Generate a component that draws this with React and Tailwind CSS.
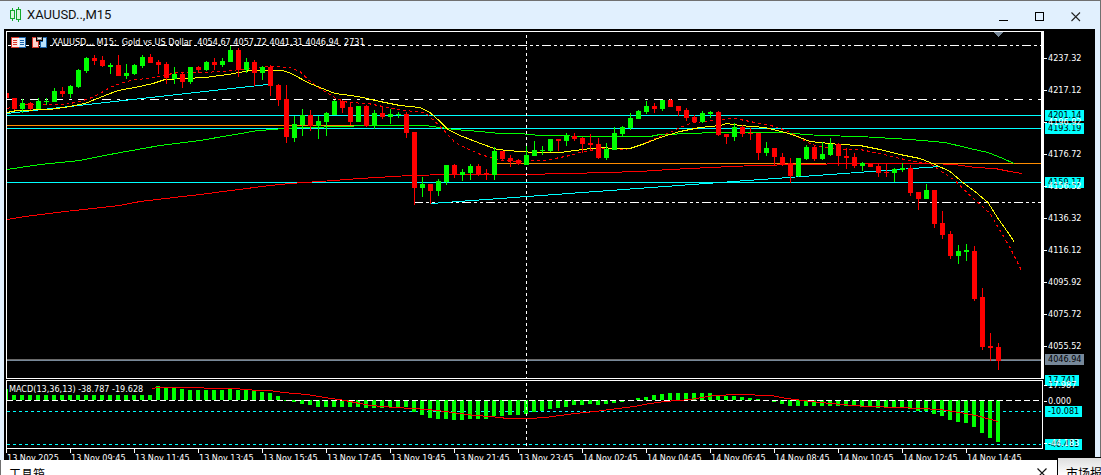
import React from "react";

// Each candle: direction, high, body top, body bottom, low. Candles are 8 units apart.
const CANDLES = `r 93 93 98 107|r 98 98 109 110|g 99 103 109 113|r 102 103 109 110|g 98 101 109 109|g 98 101 102 105|g 88 91 102 102|r 87 91 94 97|g 85 86 94 98|g 69 70 87 88|g 57 58 71 73|r 55 58 61 65|r 56 60 66 67|g 63 65 67 74|r 55 65 76 76|g 64 73 76 79|g 64 65 74 75|g 55 57 66 68|r 54 57 63 63|r 60 62 65 74|r 62 64 78 84|g 67 74 79 84|r 73 74 82 88|g 67 67 82 84|r 66 67 70 73|g 61 62 70 71|r 58 62 65 70|g 58 61 65 67|g 46 50 62 62|r 48 50 70 77|g 58 62 70 73|r 60 62 73 86|g 66 67 73 80|r 65 67 86 96|r 84 85 100 106|r 85 99 137 143|g 116 124 138 142|g 109 115 125 136|r 110 115 126 131|g 116 121 126 139|g 112 113 122 136|g 100 101 115 115|r 100 101 108 113|r 103 107 122 125|g 106 106 122 122|r 105 106 126 127|g 110 113 126 129|r 107 113 117 119|g 109 114 117 124|g 112 114 115 118|r 112 114 133 138|r 132 132 188 205|g 177 184 188 197|r 184 184 191 204|g 179 181 191 196|g 165 165 182 185|r 164 165 175 178|g 169 172 175 181|g 164 166 173 180|r 164 166 175 176|r 169 173 174 180|g 147 151 175 180|r 151 151 159 161|r 155 158 161 167|r 159 160 164 165|g 146 155 165 165|g 141 150 156 156|g 146 150 151 155|g 139 139 151 152|r 139 139 141 151|g 133 136 141 146|r 133 136 139 141|r 137 138 144 153|r 134 143 145 150|r 138 144 158 159|g 143 149 158 160|g 127 133 150 150|g 126 127 134 136|g 113 118 128 130|g 110 111 119 119|g 101 106 112 114|r 103 106 109 113|g 100 100 109 111|r 99 100 107 107|r 106 106 111 116|r 108 110 118 121|r 115 117 122 123|g 111 113 122 123|g 111 112 114 118|r 111 112 135 136|r 134 134 137 144|g 123 127 137 141|r 125 127 134 137|r 128 133 134 140|r 133 133 153 160|g 142 148 153 156|r 148 148 157 166|r 153 157 165 166|r 158 163 176 183|g 158 158 176 177|g 145 147 159 160|r 145 147 159 161|g 142 154 159 160|g 138 144 155 156|r 143 144 156 166|r 148 156 158 169|r 153 157 166 168|g 162 163 166 171|r 163 164 167 167|r 164 166 173 177|r 164 172 173 177|g 168 169 173 182|g 163 168 170 172|r 165 168 193 196|r 192 192 199 210|g 184 190 199 199|r 190 190 224 228|r 211 223 235 239|r 231 234 256 259|g 245 251 256 264|g 244 250 252 261|r 246 251 299 301|r 288 297 347 350|r 333 346 348 361|r 343 347 361 370`
  .split("|")
  .map((row, i) => {
    const [dir, high, top, bottom, low] = row.split(" ");
    return { x: 6 + i * 8, fill: dir === "r" ? "#ff0000" : "#00ff00", high: +high, top: +top, bottom: +bottom, low: +low };
  });

// Histogram ends; the zero level is at 400.
const HISTOGRAM = [
  389, ...Array(18).fill(395), 386, 388, 388, 389, 390, 390, 390, 390, 390, 389, 390, 390, 391, 392, 393, 396, 401, 402, 404, 405,
  407, 407, 407, 407, 407, 407, 408, 408, 408, 407, 407, 407, 412, 415, 418, 419, 419, 420, 420, 419, 419, 419, 416, 416, 415, 415,
  414, 412, 411, 409, 408, 407, 405, 405, 404, 405, 404, 403, 402, 401, 398, 397, 395, 394, 393, 393, 393, 393, 393, 393, 396, 396,
  396, 397, 398, 399, 401, 402, 404, 406, 406, 406, 406, 406, 406, 406, 406, 406, 407, 406, 408, 408, 407, 407, 409, 411, 411, 414,
  416, 420, 422, 423, 427, 433, 438, 442,
];

const YELLOW = "7,112 17,110 50,109 64,107 85,103 100,97 118,90 135,87 153,83 165,79 205,77 228,74 245,71 250,70 283,70 291,73 310,83 335,93 358,96 380,101 400,105 420,107 430,112 440,121 448,129 460,135 478,142 497,149 520,151 535,152 560,152 575,150 600,147 615,148 630,148 645,143 660,137 670,134 680,131 700,127 720,125 727,123 740,125 765,127 785,132 795,135 810,141 840,144 860,145 880,149 900,154 920,158 935,164 950,171 964,183 975,191 988,202 998,218 1008,232 1014,241";
const DOTTED = "7,108 25,104 65,104 80,101 92,97 100,93 110,87 120,83 135,79 150,78 163,75 178,72 200,72 225,71 240,69 255,67 275,66 290,67 300,71 308,79 318,87 327,92 336,98 348,102 368,103 388,107 405,110 425,112 435,121 445,131 455,142 465,147 478,153 490,157 500,160 515,161 530,160 545,160 560,157 570,155 580,152 595,149 605,148 625,149 640,145 655,138 670,132 680,127 690,123 703,121 720,119 735,118 745,120 760,123 775,126 788,131 810,143 818,146 840,149 860,149 880,153 900,158 915,161 930,163 940,170 955,180 970,195 990,213 1000,230 1010,247 1021,269";
const GREEN = "7,169 40,164 80,160 115,153 160,145 200,140 235,134 258,130 275,129 282,128 338,126 370,125 425,125 440,127 455,129 480,131 500,133 520,133 540,135 600,136 650,136 660,134 695,133 710,132 780,132 820,135 860,136 910,139 945,142 970,148 988,152 1003,158 1014,163";
const RED = "7,219 25,216 65,211 120,205 140,201 200,194 270,185 290,183 320,181 360,178 410,175 450,174 520,174 570,173 640,171 670,169 710,167 755,165 800,164 826,164 828,163 930,163 955,164 975,167 995,168 1010,171 1022,173";
const SIGNAL = "152,388 158,387 200,387 208,388 234,388 258,390 270,390 283,392 307,394 325,397 345,400 360,403 371,405 395,407 413,408 427,409 445,411 460,413 475,415 490,416 508,418 530,418 545,417 560,415 575,413 595,411 610,409 634,406 650,403 665,401 690,399 714,395 738,394 771,395 787,398 803,400 820,402 842,404 867,406 900,407 940,409 966,413 980,416 998,421";

const PRICES = ["4237.32", "4217.12", "4196.92", "4176.72", "4156.52", "4136.32", "4116.12", "4095.92", "4075.72", "4055.52"];
const TIMES = [
  "13 Nov 2025", "13 Nov 09:45", "13 Nov 11:45", "13 Nov 13:45", "13 Nov 15:45", "13 Nov 17:45", "13 Nov 19:45", "13 Nov 21:45",
  "13 Nov 23:45", "14 Nov 02:45", "14 Nov 04:45", "14 Nov 06:45", "14 Nov 08:45", "14 Nov 10:45", "14 Nov 12:45", "14 Nov 14:45",
];

function H({ y, from = 7, to = 1041, ...rest }) {
  return <path d={`M${from} ${y + 0.5}H${to}`} {...rest} />;
}

function Curve({ points, ...rest }) {
  return <polyline points={points} transform="translate(0 0.5)" {...rest} />;
}

function PriceChart() {
  return (
    <svg viewBox="6 31 1038 348" preserveAspectRatio="none" className="block h-[348px] w-full" shapeRendering="crispEdges" fill="none" aria-label="Price chart">
      <g stroke="#00ffff">
        <H y={115} />
        <H y={128} />
        <H y={182} />
      </g>
      <H y={125} to={370} stroke="#ff8c00" />
      <Curve points={RED} stroke="#ff0000" />
      <H y={163} from={497} to={826} stroke="#ff8c00" />
      <H y={163} from={930} stroke="#ff8c00" />
      <H y={359} stroke="#696969" />
      <H y={360} stroke="#778899" />
      <g stroke="#ffffff">
        <H y={45} strokeDasharray="9 3 3 3 3 3" strokeDashoffset="17" />
        <H y={99} from={6} strokeDasharray="9 6 3 6" />
        <H y={202} from={414} strokeDasharray="9 3 3 3 3 3" />
        <path d="M526.5 31V378" strokeDasharray="3 3" strokeDashoffset="2" />
      </g>
      <Curve points={GREEN} stroke="#00ff00" />
      <Curve points="7,113 268,84" stroke="#00ffff" />
      <Curve points="431,203 940,166" stroke="#00ffff" />
      <Curve points={DOTTED} stroke="#ff0000" strokeDasharray="3 3" />
      <Curve points={YELLOW} stroke="#ffff00" />
      {CANDLES.map((c) => (
        <g key={c.x} fill={c.fill}>
          <rect x={c.x} y={c.high} width="1" height={c.low - c.high} />
          <rect x={c.x - 2} y={c.top} width="5" height={c.bottom - c.top} />
        </g>
      ))}
      <path d="M994 32H1003L998.5 37Z" fill="#778899" />
      <path d="M6 31.5H1044M6.5 31V379M6 378.5H1044" stroke="#fff" />
      <path d="M1041 31H1044V379H1041Z" fill="#fff" />
    </svg>
  );
}

function MacdChart() {
  return (
    <svg viewBox="6 380 1038 69" preserveAspectRatio="none" className="block h-[69px] w-full" shapeRendering="crispEdges" fill="none" aria-label="MACD">
      <H y={411} stroke="#00ffff" strokeDasharray="3 3" />
      <H y={444} stroke="#00ffff" strokeDasharray="3 3" />
      {HISTOGRAM.map((end, i) => (
        <rect key={i} x={4 + i * 8} y={Math.min(end, 400)} width="4" height={Math.max(Math.abs(end - 400), 1)} fill="#00ff00" />
      ))}
      <H y={400} stroke="#fff" strokeDasharray="6 3" />
      <path d="M526.5 380V448" stroke="#fff" strokeDasharray="3 3" strokeDashoffset="3" />
      <Curve points={SIGNAL} stroke="#ff0000" />
      <path d="M6 380.5H1043M6.5 380V449M6 448.5H1043M1042.5 380V449" stroke="#fff" />
    </svg>
  );
}

function Tick({ children, className = "" }) {
  return (
    <div className={`flex items-center gap-px text-white ${className}`}>
      <span className="h-px w-[3px] bg-white" />
      <span>{children}</span>
    </div>
  );
}

function Level({ children, className }) {
  return <div className={`absolute left-px h-[11px] pl-[3px] leading-[11px] text-black ${className}`}>{children}</div>;
}

function Axis() {
  return (
    <div className="relative w-[51px] shrink-0 pt-[13px]">
      <Level className="top-[81px] w-[39px] bg-[#00ffff]">4201.14</Level>
      <Level className="top-[94px] w-[39px] bg-[#00ffff]">4193.19</Level>
      <Level className="top-[148px] w-[39px] bg-[#00ffff]">4159.17</Level>
      <Level className="top-[325px] w-[39px] bg-[#778899]">4046.94</Level>
      <Level className="top-[346px] w-[34px] bg-[#00ffff]">17.741</Level>
      <Level className="top-[377px] w-[37px] bg-[#00ffff]">-10.081</Level>
      <Level className="top-[410px] w-[37px] bg-[#00ffff]">-46.411</Level>
      <div className="relative">
        {PRICES.map((p) => (
          <Tick key={p} className="h-8">{p}</Tick>
        ))}
        <Tick className="mt-[15px] h-4">17.987</Tick>
        <Tick className="h-4">0.000</Tick>
        <Tick className="mt-[26px] h-4">-44.183</Tick>
      </div>
    </div>
  );
}

function CandlesIcon() {
  return (
    <svg width="12" height="16" viewBox="0 0 12 16" fill="#d8f6dc" stroke="#12a82a" shapeRendering="crispEdges" aria-hidden="true">
      <path d="M2.5 1V14M8.5 0V15" />
      <path d="M.5 3.5H4.5V11.5H.5ZM6.5 2.5H10.5V12.5H6.5Z" />
    </svg>
  );
}

function DepthIcon() {
  return (
    <svg width="15" height="11" viewBox="0 0 15 11" shapeRendering="crispEdges" aria-hidden="true">
      <path d="M0 0H8V11H0Z" fill="#d8382c" />
      <path d="M8 0H15V11H8Z" fill="#1c62a8" />
      <path d="M1 1H7V10H1Z" fill="#ffe9e5" />
      <path d="M7 1H8V10H7Z" fill="#fff" />
      <path d="M8 1H14V10H8Z" fill="#d3ecfd" />
      <path d="M2 3H6V4H2ZM2 5H6V6H2ZM2 7H6V8H2Z" fill="#d8382c" />
      <path d="M9 3H13V4H9ZM9 5H13V6H9ZM9 7H13V8H9Z" fill="#1c62a8" />
    </svg>
  );
}

function TradeIcon() {
  return (
    <svg width="15" height="11" viewBox="0 0 15 11" shapeRendering="crispEdges" aria-hidden="true">
      <path d="M0 0H4V4H7V11H0Z" fill="#d8382c" />
      <path d="M1 1H4V5H6V10H1Z" fill="#ffd5cd" />
      <path d="M11 0H15V11H8V4H11Z" fill="#1c62a8" />
      <path d="M11 1H14V10H9V5H11Z" fill="#b9e1fb" />
      <path d="M5 0H10V3H5Z" fill="#999" />
      <path d="M6 1H9V2H6Z" fill="#fff" />
    </svg>
  );
}

export default function App() {
  return (
    <div className="flex h-screen flex-col overflow-hidden bg-white">
      <main className="shrink-0 border-t border-r border-[#707070] bg-[#e1f0fe]">
        <header className="flex h-7 items-center pl-[10px]">
          <CandlesIcon />
          <h1 className="ml-[5px] font-['Roboto',sans-serif] text-[13px] leading-4 text-[#101010]">XAUUSD..,M15</h1>
          <div className="ml-auto flex h-full items-center pt-1 pr-[6px]">
            <button aria-label="Minimize" className="flex h-6 w-9 items-center justify-center">
              <svg width="10" height="10" shapeRendering="crispEdges"><path d="M0 8.5H9" stroke="#000" /></svg>
            </button>
            <button aria-label="Maximize" className="flex h-6 w-9 items-center justify-center">
              <svg width="10" height="10" fill="none" shapeRendering="crispEdges"><path d="M.5 .5H8.5V8.5H.5Z" stroke="#000" /></svg>
            </button>
            <button aria-label="Close" className="flex h-6 w-9 items-center justify-center">
              <svg width="10" height="10"><path d="M.5 .5L9 9M9 .5L.5 9" stroke="#222" strokeWidth="1.1" /></svg>
            </button>
          </div>
        </header>

        <div className="mr-[5px] ml-1 flex overflow-hidden bg-black font-['DejaVu_Sans_Condensed','DejaVu_Sans',sans-serif] text-[9px] leading-[11px]">
          <div className="min-w-0 flex-1 pt-[2px] pl-[2px]">
            <section className="relative">
              <PriceChart />
              <div className="absolute top-[6px] left-[5px] flex items-center whitespace-pre text-white">
                <DepthIcon />
                <span className="ml-[6px]"><TradeIcon /></span>
                <h2 className="ml-[5px]">{"XAUUSD.., M15:  Gold vs US Dollar  4054.67 4057.72 4041.31 4046.94  2731"}</h2>
              </div>
            </section>
            <section className="relative mt-px">
              <MacdChart />
              <h2 className="absolute top-1 left-[3px] whitespace-pre text-white">MACD(13,36,13) -38.787 -19.628</h2>
            </section>
            <div className="flex h-[11px] overflow-hidden text-white">
              {TIMES.map((t) => (
                <div key={t} className="w-16 shrink-0 whitespace-nowrap">
                  <div className="h-1 w-px bg-white" />
                  <div className="pl-px">{t}</div>
                </div>
              ))}
            </div>
          </div>
          <Axis />
        </div>
      </main>

      <footer className="flex min-h-0 flex-1 font-['Noto_Sans_CJK_SC',sans-serif] text-xs leading-4 text-black">
        <div className="flex min-w-0 flex-1 items-start justify-between border-l border-[#707070] bg-white pt-[6px] pr-[10px] pl-2">
          <span>工具箱</span>
          <button aria-label="Close toolbox" className="pt-[2px]">
            <svg className="block" width="10" height="10"><path d="M.5 .5L9.5 9.5M9.5 .5L.5 9.5" stroke="#111" strokeWidth="1.2" /></svg>
          </button>
        </div>
        <div className="relative -mt-[3px] w-11 shrink-0 overflow-hidden border-t border-l border-black bg-linear-to-b from-[#dedede] to-white pt-[7px] pl-2 whitespace-nowrap">
          市场报
        </div>
      </footer>
    </div>
  );
}
